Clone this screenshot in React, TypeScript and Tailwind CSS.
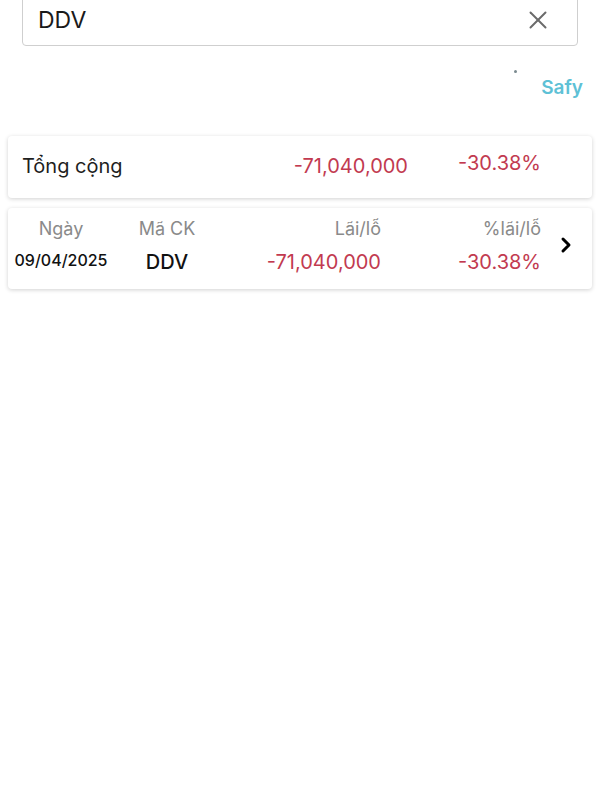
import { X, ChevronRight } from "lucide-react";

export default function App() {
  return (
    <div className="min-h-[800px] bg-white font-['Inter',sans-serif] text-black">
      <div className="px-[22px]">
        <div className="-mt-[12px] flex h-[58px] items-center justify-between rounded-[4px] border border-[#cfcfcf] pl-[15px] pr-[24px] pt-[6px]">
          <span className="text-[23px] text-[#1a1a1a]">DDV</span>
          <X className="h-[30px] w-[30px] text-[#6b6b6b]" strokeWidth={1.6} />
        </div>
      </div>

      <div className="relative flex h-[72px] items-center justify-end pt-[12px] pr-[17px]">
        <span className="absolute left-[514px] top-[24px] h-[3px] w-[3px] rounded-full bg-[#7a8a8f]" />
        <span className="text-[19px] font-semibold text-[#5ec1d6]">Safy</span>
      </div>

      <div className="mx-[8px] mt-[18px] flex h-[62px] items-center rounded-[4px] bg-white pb-[3px] pl-[14px] pr-[51px] shadow-[0_1px_4px_rgba(0,0,0,0.18)]">
        <span className="flex-1 text-[20px] text-[#1f1f1f]">Tổng cộng</span>
        <span className="text-[20px] text-[#c23a50]">-71,040,000</span>
        <span className="-mt-[6px] w-[133px] text-right text-[20px] text-[#c23a50]">-30.38%</span>
      </div>

      <div className="mx-[8px] mt-[10px] grid h-[81px] grid-cols-[106px_106px_161px_160px_1fr] grid-rows-[34px_34px] items-center rounded-[4px] bg-white pt-[3px] shadow-[0_1px_4px_rgba(0,0,0,0.18)]">
        <span className="text-center text-[18px] text-[#8a8a8a]">Ngày</span>
        <span className="text-center text-[18px] text-[#8a8a8a]">Mã CK</span>
        <span className="text-right text-[18px] text-[#8a8a8a]">Lãi/lỗ</span>
        <span className="text-right text-[18px] text-[#8a8a8a]">%lãi/lỗ</span>
        <span className="row-span-2 flex justify-center pr-[2px]">
          <ChevronRight className="h-[24px] w-[24px] text-black" strokeWidth={3} />
        </span>
        <span className="-mt-[4px] text-center text-[16px] font-medium text-[#111]">09/04/2025</span>
        <span className="text-center text-[20px] font-medium text-[#111]">DDV</span>
        <span className="text-right text-[20px] text-[#c23a50]">-71,040,000</span>
        <span className="text-right text-[20px] text-[#c23a50]">-30.38%</span>
      </div>
    </div>
  );
}
